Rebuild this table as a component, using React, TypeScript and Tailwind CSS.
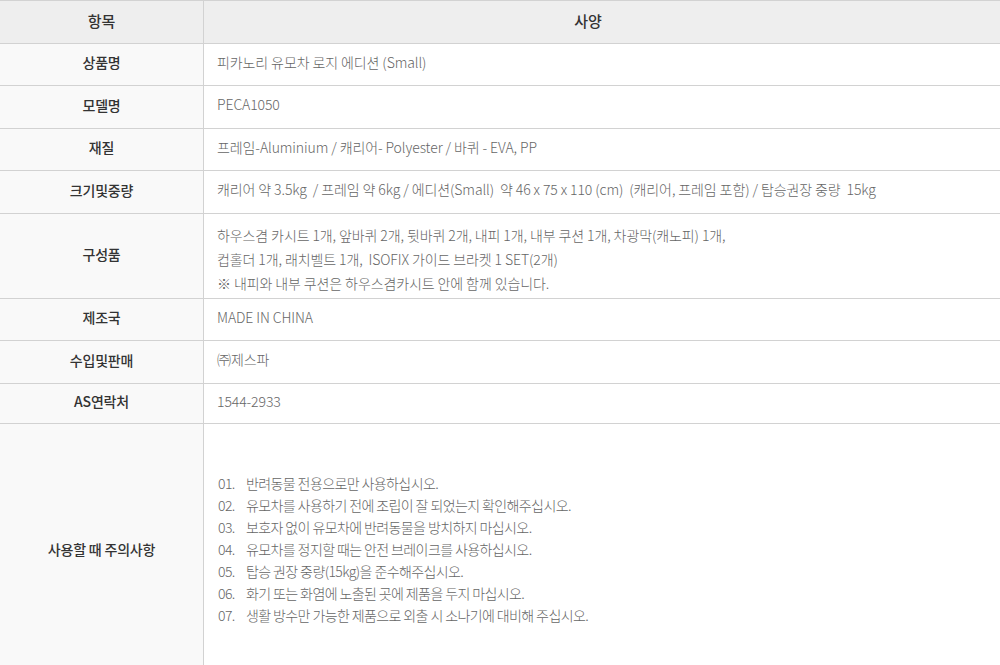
const specRows: { label: string; h: string; lines: string[] }[] = [
  { label: "상품명", h: "h-[42px]", lines: ["피카노리 유모차 로지 에디션 (Small)"] },
  { label: "모델명", h: "h-[43px]", lines: ["PECA1050"] },
  { label: "재질", h: "h-[42px]", lines: ["프레임-Aluminium / 캐리어- Polyester / 바퀴 - EVA, PP"] },
  {
    label: "크기및중량",
    h: "h-[43px]",
    lines: [
      "캐리어 약 3.5kg  / 프레임 약 6kg / 에디션(Small)  약 46 x 75 x 110 (cm)  (캐리어, 프레임 포함) / 탑승권장 중량  15kg",
    ],
  },
  {
    label: "구성품",
    h: "h-[85px]",
    lines: [
      "하우스겸 카시트 1개, 앞바퀴 2개, 뒷바퀴 2개, 내피 1개, 내부 쿠션 1개, 차광막(캐노피) 1개,",
      "컵홀더 1개, 래치벨트 1개,  ISOFIX 가이드 브라켓 1 SET(2개)",
      "※ 내피와 내부 쿠션은 하우스겸카시트 안에 함께 있습니다.",
    ],
  },
  { label: "제조국", h: "h-[42px]", lines: ["MADE IN CHINA"] },
  { label: "수입및판매", h: "h-[43px]", lines: ["㈜제스파"] },
  { label: "AS연락처", h: "h-[40px]", lines: ["1544-2933"] },
];

const cautions = [
  "반려동물 전용으로만 사용하십시오.",
  "유모차를 사용하기 전에 조립이 잘 되었는지 확인해주십시오.",
  "보호자 없이 유모차에 반려동물을 방치하지 마십시오.",
  "유모차를 정지할 때는 안전 브레이크를 사용하십시오.",
  "탑승 권장 중량(15kg)을 준수해주십시오.",
  "화기 또는 화염에 노출된 곳에 제품을 두지 마십시오.",
  "생활 방수만 가능한 제품으로 외출 시 소나기에 대비해 주십시오.",
];

export default function App() {
  return (
    <main
      className="w-[1000px] h-[665px] overflow-hidden bg-white"
      style={{ fontFamily: '"Noto Sans CJK KR", "Noto Sans", sans-serif' }}
    >
      <div className="w-full border-t border-[#d2d2d2]">
        {/* header */}
        <div className="flex h-[43px] border-b border-[#d2d2d2] bg-[#eeeeee] text-[15px] font-medium text-[#333]">
          <div className="w-[204px] shrink-0 border-r border-[#d2d2d2] flex items-center justify-center pb-[2px]">
            항목
          </div>
          <div className="flex-1 flex items-center justify-center pr-[28px] pb-[2px]">사양</div>
        </div>

        {specRows.map((row) => (
          <div key={row.label} className={`flex ${row.h} border-b border-[#d2d2d2]`}>
            <div className="w-[204px] shrink-0 bg-[#f9f9f9] border-r border-[#d2d2d2] flex items-center justify-center pb-[4px] text-[14px] font-medium text-[#333] tracking-[-0.2px]">
              {row.label}
            </div>
            {row.lines.length > 1 ? (
              <div className="flex-1 flex flex-col justify-center pl-[13px] pt-[6px] text-[14px] font-light text-[#666] tracking-[-0.1px] leading-[24px] whitespace-pre">
                {row.lines.map((l, i) => (
                  <div key={i}>{l}</div>
                ))}
              </div>
            ) : (
              <div className="flex-1 flex items-center pl-[13px] pb-[5px] text-[14px] font-light text-[#666] tracking-[-0.1px] whitespace-pre">
                {row.lines[0]}
              </div>
            )}
          </div>
        ))}

        {/* cautions */}
        <div className="flex h-[252px] border-b border-[#d2d2d2]">
          <div className="w-[204px] shrink-0 bg-[#f9f9f9] border-r border-[#d2d2d2] flex items-center justify-center text-[14px] font-medium text-[#333] tracking-[-0.2px]">
            사용할 때 주의사항
          </div>
          <ul className="flex-1 flex flex-col justify-center pl-[14px] pb-[2px] text-[14px] font-light text-[#666] tracking-[-0.6px] leading-[22px]">
            {cautions.map((c, i) => (
              <li key={i} className="flex">
                <span className="w-[28px] shrink-0">0{i + 1}.</span>
                <span>{c}</span>
              </li>
            ))}
          </ul>
        </div>
      </div>
    </main>
  );
}
